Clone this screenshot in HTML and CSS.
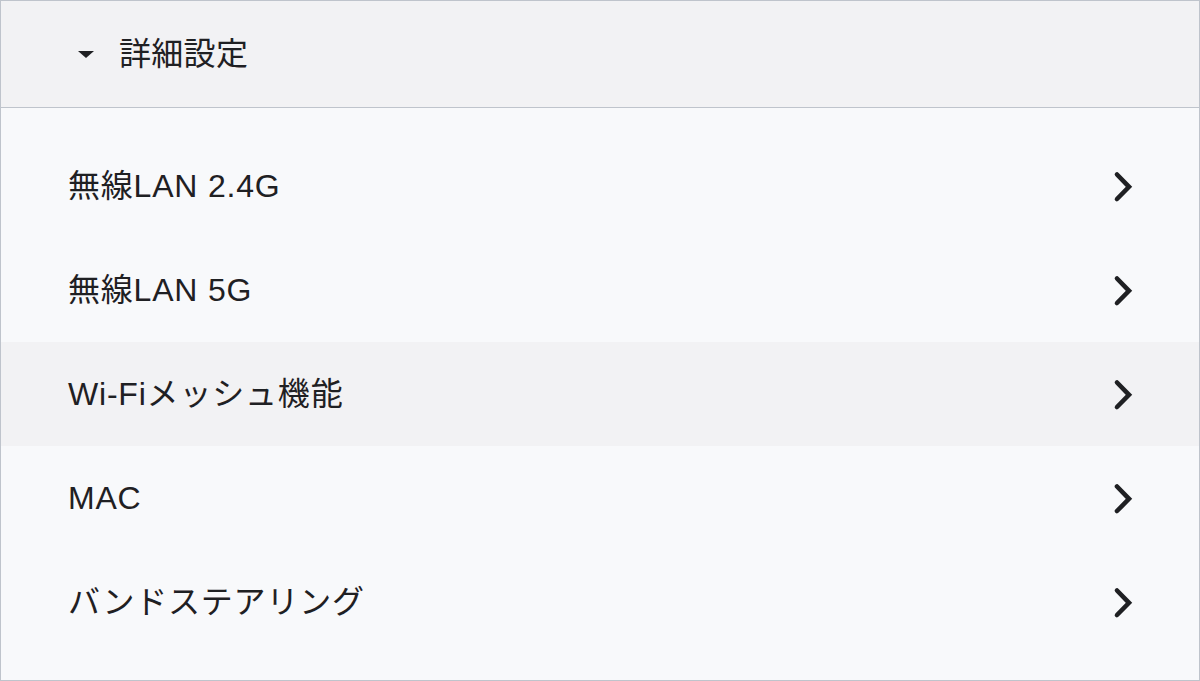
FILE: index.html
```html
<!DOCTYPE html>
<html lang="ja">
<head>
<meta charset="utf-8">
<title>詳細設定</title>
<link rel="stylesheet" href="styles.css">
</head>
<body>
<div class="panel">
  <div class="panel-header">
    <span class="caret"></span>
    <span class="header-title">詳細設定</span>
  </div>
  <ul class="menu">
    <li class="menu-item"><span class="label">無線LAN 2.4G</span><svg class="chev" viewBox="0 0 24 34" width="24" height="34"><path d="M5 4.5 L17 16.8 L5 29"/></svg></li>
    <li class="menu-item"><span class="label">無線LAN 5G</span><svg class="chev" viewBox="0 0 24 34" width="24" height="34"><path d="M5 4.5 L17 16.8 L5 29"/></svg></li>
    <li class="menu-item active"><span class="label">Wi-Fiメッシュ機能</span><svg class="chev" viewBox="0 0 24 34" width="24" height="34"><path d="M5 4.5 L17 16.8 L5 29"/></svg></li>
    <li class="menu-item"><span class="label">MAC</span><svg class="chev" viewBox="0 0 24 34" width="24" height="34"><path d="M5 4.5 L17 16.8 L5 29"/></svg></li>
    <li class="menu-item"><span class="label">バンドステアリング</span><svg class="chev" viewBox="0 0 24 34" width="24" height="34"><path d="M5 4.5 L17 16.8 L5 29"/></svg></li>
  </ul>
</div>
</body>
</html>
```

FILE: styles.css
```css
* { box-sizing: border-box; }
html, body { margin: 0; padding: 0; }
body {
  background: #f8f9fb;
  font-family: "Liberation Sans", "Noto Sans CJK JP", sans-serif;
  color: #1f2023;
}
.panel {
  width: 1200px;
  height: 681px;
  border: 1px solid #bfc4cc;
  background: #f8f9fb;
  display: flex;
  flex-direction: column;
}
.panel-header {
  height: 107px;
  flex: none;
  background: #f2f2f4;
  border-bottom: 1px solid #bfc4cc;
  display: flex;
  align-items: center;
  padding-left: 77px;
}
.caret {
  width: 0;
  height: 0;
  border-left: 8px solid transparent;
  border-right: 8px solid transparent;
  border-top: 7px solid #1f2023;
  margin-top: 1px;
}
.header-title {
  margin-left: 25px;
  font-size: 32px;
  letter-spacing: 0.3px;
  line-height: 1;
}
.menu {
  list-style: none;
  margin: 0;
  padding: 26px 0 26px;
}
.menu-item {
  height: 104px;
  display: flex;
  align-items: center;
  justify-content: space-between;
  padding: 0 63px 0 67px;
}
.menu-item.active {
  background: #f2f2f4;
}
.label {
  font-size: 32px;
  letter-spacing: 0.8px;
  line-height: 1;
}
.chev {
  display: block;
  margin-top: 2px;
}
.chev path {
  fill: none;
  stroke: #1f2023;
  stroke-width: 4.6;
  stroke-linecap: round;
  stroke-linejoin: miter;
}
```
